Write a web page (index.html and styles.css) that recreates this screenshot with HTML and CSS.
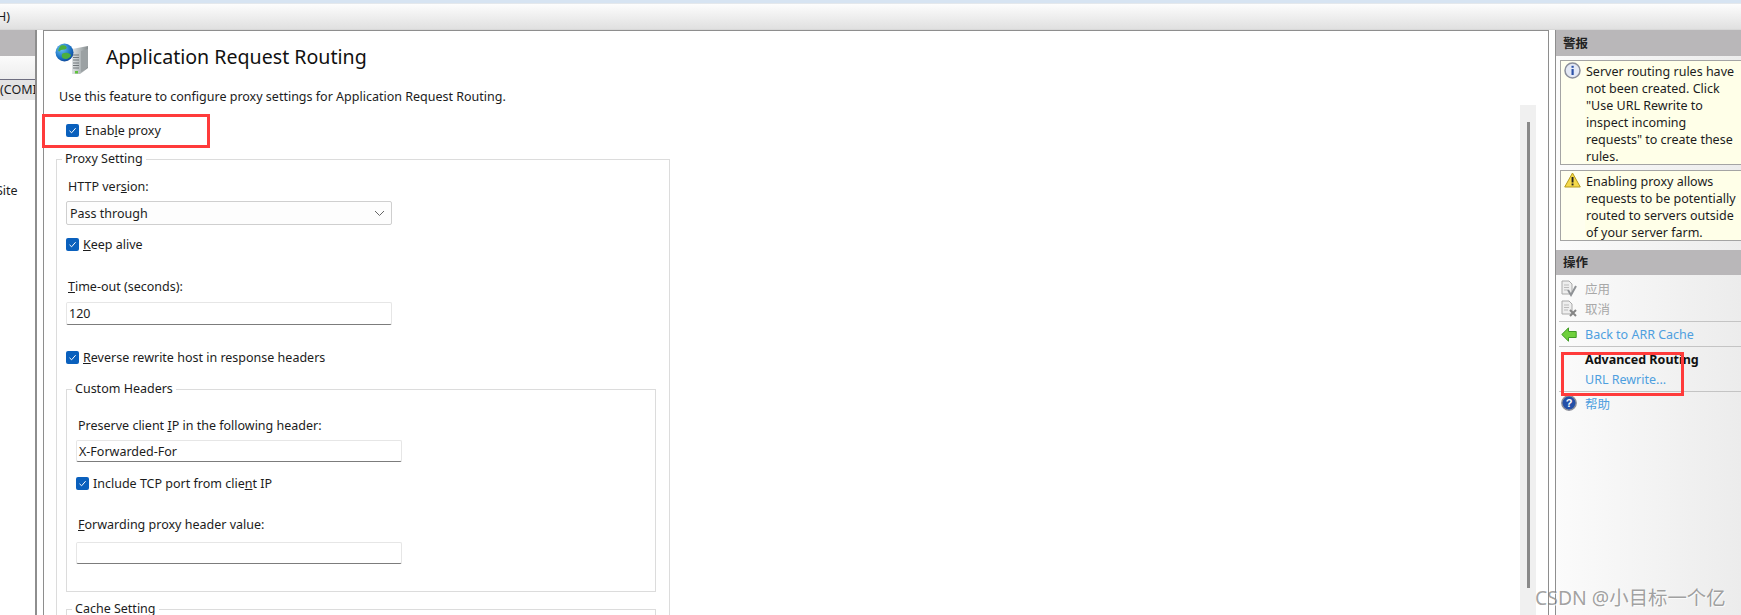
FILE: index.html
```html
<!DOCTYPE html>
<html lang="en">
<head>
    <meta charset="UTF-8">
    <title>Application Request Routing</title>
    <link rel="stylesheet" href="styles.css">
</head>
<body>
    <div class="top-strip"></div>
    <div class="menu-bar"><span class="menu-text">H)</span></div>
    <div class="panes">
        <aside class="tree">
            <div class="tree-head"></div>
            <div class="tree-band"></div>
            <div class="tree-selected">(COMI</div>
            <div class="tree-site">Site</div>
        </aside>

        <main class="feature">
            <div class="feature-head">
                <svg class="feature-icon" width="36" height="34" viewBox="0 0 36 34">
                    <defs>
                        <linearGradient id="srv" x1="0" x2="1" y1="0" y2="0">
                            <stop offset="0" stop-color="#dfe3e4"/>
                            <stop offset="0.5" stop-color="#b4babc"/>
                            <stop offset="1" stop-color="#858b8d"/>
                        </linearGradient>
                        <radialGradient id="globe" cx="0.35" cy="0.3" r="0.8">
                            <stop offset="0" stop-color="#6ec3f2"/>
                            <stop offset="0.6" stop-color="#1c74c6"/>
                            <stop offset="1" stop-color="#0d3f8f"/>
                        </radialGradient>
                    </defs>
                    <path d="M17 6 L33 3 V25 L25 31 H17 Z" fill="url(#srv)"/>
                    <path d="M18 20h6M18 22.5h6M18 25h6M18 12h6M18 14.5h6M18 17h6" stroke="#70767a" stroke-width="1"/>
                    <path d="M26 8 L33 6 V24 L26 29 Z" fill="#9ba1a3"/>
                    <rect x="20" y="28" width="3" height="2.5" fill="#61c23c"/>
                    <circle cx="9.5" cy="9.5" r="9" fill="url(#globe)"/>
                    <path d="M6 2.5 C9.5 1.5 12.5 3.5 11.5 5.5 C9.5 7.5 6.5 5.5 4.5 8.5 C2.5 8.5 3 5.5 6 2.5 Z M7.5 10.5 C11 8.5 16 10.5 16 12.5 C14.5 16 10.5 17 7.5 15 C6.5 13.5 6.5 11.5 7.5 10.5 Z" fill="#4caf3d"/>
                </svg>
                <h1 class="feature-title">Application Request Routing</h1>
            </div>
            <p class="feature-desc">Use this feature to configure proxy settings for Application Request Routing.</p>

            <label class="check-row enable-row">
                <span class="check"><svg width="9" height="9" viewBox="0 0 9 9"><path d="M1.5 4.8 L3.6 6.8 L7.6 2.2" fill="none" stroke="#fff" stroke-width="1"/></svg></span>
                <span class="check-label-wide">Enab<u>l</u>e proxy</span>
            </label>

            <fieldset class="group proxy-group">
                <legend>Proxy Setting</legend>
                <div class="field-label label-http">HTTP ver<u>s</u>ion:</div>
                <div class="select-box">
                    <span>Pass through</span>
                    <svg width="11" height="7" viewBox="0 0 11 7"><path d="M1 1 L5.5 5.5 L10 1" fill="none" stroke="#666" stroke-width="1"/></svg>
                </div>
                <label class="check-row row-keep">
                    <span class="check"><svg width="9" height="9" viewBox="0 0 9 9"><path d="M1.5 4.8 L3.6 6.8 L7.6 2.2" fill="none" stroke="#fff" stroke-width="1"/></svg></span>
                    <span><u>K</u>eep alive</span>
                </label>
                <div class="field-label label-timeout"><u>T</u>ime-out (seconds):</div>
                <div class="text-box box-timeout">120</div>
                <label class="check-row row-reverse">
                    <span class="check"><svg width="9" height="9" viewBox="0 0 9 9"><path d="M1.5 4.8 L3.6 6.8 L7.6 2.2" fill="none" stroke="#fff" stroke-width="1"/></svg></span>
                    <span><u>R</u>everse rewrite host in response headers</span>
                </label>

                <fieldset class="group inner-group">
                    <legend>Custom Headers</legend>
                    <div class="field-label label-preserve">Preserve client <u>I</u>P in the following header:</div>
                    <div class="text-box box-preserve">X-Forwarded-For</div>
                    <label class="check-row row-include">
                        <span class="check"><svg width="9" height="9" viewBox="0 0 9 9"><path d="M1.5 4.8 L3.6 6.8 L7.6 2.2" fill="none" stroke="#fff" stroke-width="1"/></svg></span>
                        <span>Include TCP port from clie<u>n</u>t IP</span>
                    </label>
                    <div class="field-label label-forward"><u>F</u>orwarding proxy header value:</div>
                    <div class="text-box box-forward"></div>
                </fieldset>

                <fieldset class="group cache-group">
                    <legend>Cache Setting</legend>
                </fieldset>
            </fieldset>

            <div class="scroll-track"><div class="scroll-thumb"></div></div>
        </main>

        <aside class="actions">
            <div class="actions-head actions-head-alerts">警报</div>
            <div class="alert alert-info">
                <div class="alert-side">
                    <svg width="17" height="17" viewBox="0 0 17 17">
                        <circle cx="8.5" cy="8.5" r="7.5" fill="#e4e9f6" stroke="#8b8f9c" stroke-width="1.5"/>
                        <rect x="7.5" y="7" width="2.2" height="6" fill="#2c52a8"/>
                        <rect x="7.5" y="3.8" width="2.2" height="2" fill="#2c52a8"/>
                    </svg>
                </div>
                <div class="alert-text">Server routing rules have<br>not been created. Click<br>"Use URL Rewrite to<br>inspect incoming<br>requests" to create these<br>rules.</div>
            </div>
            <div class="alert alert-warn">
                <div class="alert-side">
                    <svg width="17" height="16" viewBox="0 0 17 16">
                        <path d="M8.5 1 L16.3 15 H0.7 Z" fill="#f5d94a" stroke="#b59a1c" stroke-width="1" stroke-linejoin="round"/>
                        <rect x="7.6" y="5" width="1.9" height="5.5" fill="#222"/>
                        <rect x="7.6" y="11.5" width="1.9" height="1.9" fill="#222"/>
                    </svg>
                </div>
                <div class="alert-text">Enabling proxy allows<br>requests to be potentially<br>routed to servers outside<br>of your server farm.</div>
            </div>

            <div class="actions-head actions-head-ops">操作</div>
            <div class="action-item is-disabled action-first">
                <svg width="16" height="17" viewBox="0 0 16 17">
                    <path d="M1 1 H8 L11 4 V14 H1 Z" fill="#eee" stroke="#aaa"/>
                    <path d="M3 5h5M3 7.5h5M3 10h4" stroke="#bbb"/>
                    <path d="M7 10 L10 15 L15 6" fill="none" stroke="#8f9296" stroke-width="2"/>
                </svg>
                <span>应用</span>
            </div>
            <div class="action-item is-disabled">
                <svg width="16" height="17" viewBox="0 0 16 17">
                    <path d="M1 1 H8 L11 4 V14 H1 Z" fill="#eee" stroke="#aaa"/>
                    <path d="M3 5h5M3 7.5h5M3 10h4" stroke="#bbb"/>
                    <path d="M9 10 L15 16 M15 10 L9 16" stroke="#858585" stroke-width="2"/>
                </svg>
                <span>取消</span>
            </div>
            <div class="action-sep sep-one"></div>
            <div class="action-item is-link action-back">
                <svg width="16" height="15" viewBox="0 0 16 15">
                    <path d="M7.5 0.8 L0.8 7.5 L7.5 14.2 V10.5 H15.2 V4.5 H7.5 Z" fill="#6fd03c" stroke="#3f9a24" stroke-width="1"/>
                </svg>
                <span>Back to ARR Cache</span>
            </div>
            <div class="action-sep sep-two"></div>
            <div class="action-title">Advanced Routing</div>
            <div class="action-item is-link action-url"><span>URL Rewrite...</span></div>
            <div class="action-sep sep-three"></div>
            <div class="action-item is-link action-help">
                <svg width="16" height="16" viewBox="0 0 16 16">
                    <circle cx="8" cy="8" r="7.2" fill="#2450a8" stroke="#8c8f99" stroke-width="1.4"/>
                    <text x="8" y="12" text-anchor="middle" font-size="11" font-weight="700" font-family="Liberation Sans" fill="#fff">?</text>
                </svg>
                <span>帮助</span>
            </div>
        </aside>
    </div>

    <div class="red-box red-enable"></div>
    <div class="red-box red-url"></div>
    <div class="watermark">CSDN @小目标一个亿</div>
</body>
</html>
```

FILE: styles.css
```css
html, body {
    margin: 0;
    padding: 0;
    height: 615px;
    overflow: hidden;
}

body {
    display: flex;
    flex-direction: column;
    position: relative;
    background-color: #fff;
    color: #1c1c1c;
    font-family: "Noto Sans", "Noto Sans CJK SC", sans-serif;
    font-size: 12.5px;
}

.top-strip {
    height: 3px;
    background-color: #d7e4f2;
    border-bottom: 1px solid #e4e8ec;
}

.menu-bar {
    height: 25px;
    padding-top: 1px;
    background: linear-gradient(#fdfdfd, #e0e0e0);
    line-height: 24px;
    box-sizing: border-box;
}

.menu-text {
    margin-left: -3px;
}

.panes {
    display: flex;
    flex: 1;
    min-height: 0;
    gap: 6px;
    border-top: 1px solid #d8d8d8;
    box-sizing: border-box;
}

/* left tree, mostly cut off by the crop */
.tree {
    width: 37px;
    flex: none;
    box-sizing: border-box;
    border-right: 2px solid #8e8e8e;
    overflow: hidden;
    white-space: nowrap;
}

.tree-head {
    height: 26px;
    background-color: #b9b7b9;
}

.tree-band {
    height: 23px;
    background: linear-gradient(#fbfbfb, #ededed);
    border-bottom: 1px solid #6e6e80;
}

.tree-selected {
    height: 20px;
    line-height: 20px;
    background-color: #e4e4e4;
}

.tree-site {
    margin-top: 81px;
    margin-left: -4px;
    line-height: 20px;
}

/* middle pane */
.feature {
    flex: 1;
    position: relative;
    min-width: 0;
    padding-left: 12px;
    border-left: 1px solid #8e8e8e;
    border-right: 1px solid #8e8e8e;
    border-top: 1px solid #8e8e8e;
    overflow: hidden;
}

.feature-head {
    display: flex;
    align-items: center;
    height: 50px;
}

.feature-icon {
    flex: none;
    margin-left: -1px;
    margin-top: 8px;
}

.feature-title {
    margin: 0 0 0 15px;
    font-size: 19.6px;
    font-weight: 400;
    color: #111;
}

.feature-desc {
    margin: 6px 0 0 3px;
    line-height: 20px;
}

.check-row {
    display: flex;
    align-items: center;
    height: 20px;
    gap: 4px;
}

.check {
    display: flex;
    align-items: center;
    justify-content: center;
    width: 13px;
    height: 13px;
    border-radius: 2px;
    background-color: #0a60bd;
}

.enable-row {
    margin: 13px 0 0 10px;
}

.check-label-wide {
    margin-left: 2px;
}

.group {
    margin: 0;
    padding: 0 0 0 9px;
    border: 1px solid #dcdcdc;
    min-width: 0;
}

.group legend {
    margin-left: -4px;
    padding: 0 3px;
    line-height: 20px;
}

.proxy-group {
    width: 614px;
    box-sizing: border-box;
    margin-top: 9px;
}

.field-label {
    margin-left: 2px;
    line-height: 20px;
}

.label-http { margin-top: 8px; }

.select-box {
    display: flex;
    align-items: center;
    justify-content: space-between;
    box-sizing: border-box;
    width: 326px;
    height: 24px;
    margin-top: 4px;
    padding: 0 6px 0 3px;
    background-color: #fdfdfd;
    border: 1px solid #cfcfcf;
    border-radius: 2px;
}

.row-keep { margin-top: 9px; }
.label-timeout { margin-top: 23px; }

.text-box {
    box-sizing: border-box;
    width: 326px;
    padding: 0 2px;
    background-color: #fff;
    border: 1px solid #e6e6e6;
    border-bottom: 1px solid #7c7c7c;
    border-radius: 2px;
}

.box-timeout {
    height: 23px;
    margin-top: 5px;
    line-height: 21px;
}

.row-reverse { margin-top: 22px; }

.inner-group {
    box-sizing: border-box;
    width: 590px;
    margin-top: 12px;
    padding-bottom: 27px;
}

.label-preserve { margin-top: 17px; }

.box-preserve {
    height: 22px;
    margin-top: 4px;
    line-height: 21px;
}

.row-include { margin-top: 11px; }
.label-forward { margin-top: 22px; }

.box-forward {
    height: 22px;
    margin-top: 7px;
}

.cache-group {
    box-sizing: border-box;
    width: 590px;
    height: 60px;
    margin-top: 7px;
}

.scroll-track {
    position: absolute;
    left: 1476px;
    top: 74px;
    bottom: 0;
    width: 16px;
    background-color: #f0f0f0;
}

.scroll-thumb {
    width: 3px;
    height: 466px;
    margin: 17px 0 0 7px;
    background-color: #8a8a8a;
}

/* right pane */
.actions {
    width: 186px;
    flex: none;
    box-sizing: border-box;
    border-left: 1px solid #8e8e8e;
    background: linear-gradient(90deg, #fbfbfb, #ececec);
    white-space: nowrap;
    overflow: hidden;
}

.actions-head {
    height: 25px;
    padding-left: 7px;
    background-color: #b9b7b9;
    font-weight: 700;
    color: #222;
    line-height: 25px;
}

.actions-head-alerts {
    height: 26px;
    line-height: 27px;
}

.actions-head-ops {
    margin-top: 9px;
}

.alert {
    display: flex;
    margin: 4px -10px 0 4px;
    background-color: #ffffe8;
    border: 1px solid #a4a4a4;
}

.alert-warn {
    margin-top: 5px;
}

.alert-side {
    width: 24px;
    flex: none;
    padding: 1px 0 0 3px;
    box-sizing: border-box;
    background-color: #ffffef;
}

.alert-side svg {
    display: block;
}

.alert-text {
    padding: 2px 0 0 1px;
    margin-bottom: -1px;
    line-height: 17px;
}

.action-item {
    display: flex;
    align-items: center;
    height: 20px;
    padding-left: 5px;
    gap: 8px;
}

.action-first { margin-top: 3px; }

.is-disabled {
    color: #a8a8a8;
}

.is-link {
    color: #4e9fdf;
}

.action-sep {
    margin-left: 3px;
    border-top: 1px solid #c4c4c4;
}

.sep-one { margin-top: 3px; }
.action-back { margin-top: 2px; }
.action-back svg { flex: none; }
.sep-two { margin-top: 2px; }

.action-title {
    height: 20px;
    margin-top: 3px;
    padding-left: 29px;
    font-weight: 700;
    color: #111;
    line-height: 20px;
}

.action-url {
    margin-top: -1px;
    padding-left: 29px;
}

.sep-three { margin-top: 2px; }
.action-help { margin-top: 1px; }

/* annotations over the screenshot */
.red-box {
    position: absolute;
    box-sizing: border-box;
    border: 3px solid #ff3b3b;
}

.red-enable {
    left: 42px;
    top: 114px;
    width: 168px;
    height: 34px;
}

.red-url {
    left: 1561px;
    top: 352px;
    width: 123px;
    height: 44px;
}

.watermark {
    position: absolute;
    left: 1535px;
    top: 586px;
    font-size: 19.4px;
    line-height: 24px;
    color: rgba(110, 110, 110, 0.65);
    text-shadow: 1px 1px 0 rgba(255, 255, 255, 0.7);
    white-space: nowrap;
}
```
